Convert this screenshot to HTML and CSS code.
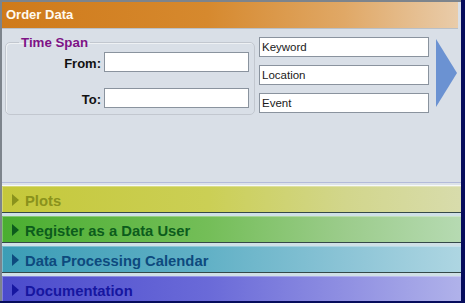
FILE: index.html
```
<!DOCTYPE html>
<html>
<head>
<meta charset="utf-8">
<link rel="stylesheet" href="styles.css">
</head>
<body>
<div class="frame">
  <div class="header">Order Data</div>
  <div class="panel">
    <fieldset class="timespan">
      <legend>Time Span</legend>
      <div class="span-grid">
        <label class="lbl">From:</label><input class="field wide" type="text">
        <label class="lbl">To:</label><input class="field wide" type="text">
      </div>
    </fieldset>
    <div class="search">
      <input class="field narrow" type="text" value="Keyword">
      <input class="field narrow" type="text" value="Location">
      <input class="field narrow" type="text" value="Event">
    </div>
    <svg class="go" width="21" height="68" viewBox="0 0 21 68"><polygon points="0,0 21,34 0,68" fill="#6b92d2"/></svg>
  </div>
  <div class="sep"></div>
  <div class="bars">
    <div class="bar plots"><svg class="tri" width="7" height="12" viewBox="0 0 7 12"><polygon points="0,0 7,6 0,12"/></svg><span>Plots</span></div>
    <div class="bar register"><svg class="tri" width="7" height="12" viewBox="0 0 7 12"><polygon points="0,0 7,6 0,12"/></svg><span>Register as a Data User</span></div>
    <div class="bar calendar"><svg class="tri" width="7" height="12" viewBox="0 0 7 12"><polygon points="0,0 7,6 0,12"/></svg><span>Data Processing Calendar</span></div>
    <div class="bar docs"><svg class="tri" width="7" height="12" viewBox="0 0 7 12"><polygon points="0,0 7,6 0,12"/></svg><span>Documentation</span></div>
  </div>
</div>
</body>
</html>
```
FILE: styles.css
```
html, body {
  margin: 0;
  padding: 0;
  background: #060c5c;
  height: 303px;
  overflow: hidden;
}
.frame {
  width: 461px;
  height: 301px;
  box-sizing: border-box;
  border-left: 2px solid #7d848c;
  border-top: 2px solid #7d848c;
  background: #d9dfe7;
  display: flex;
  flex-direction: column;
  overflow: hidden;
  font-family: "Liberation Sans", Arial, sans-serif;
}
.header {
  flex: none;
  height: 26px;
  line-height: 26px;
  margin-right: 3px;
  padding-left: 4px;
  border-bottom: 1px solid #b9c0c8;
  background: linear-gradient(to right, #cf7a1a 0%, #d6892e 45%, #e0a866 75%, #e9ccaa 100%);
  color: #fffaf0;
  font-weight: bold;
  font-size: 13px;
}
.panel {
  flex: none;
  height: 153px;
  box-sizing: border-box;
  padding: 6px 0 0 3px;
  display: flex;
  align-items: flex-start;
}
.timespan {
  box-sizing: border-box;
  width: 250px;
  margin: 0;
  padding: 2px 0 6px 0;
  border: 1px solid #c2c7cf;
  border-radius: 5px;
  box-shadow: inset 1px 1px 0 #eef1f4;
}
.timespan legend {
  margin-left: 13px;
  padding: 0 2px;
  color: #7e1386;
  font-weight: bold;
  font-size: 13.3px;
  line-height: 15px;
}
.span-grid {
  display: grid;
  grid-template-columns: 95px 145px;
  column-gap: 3px;
  row-gap: 16px;
  align-items: center;
}
.lbl {
  text-align: right;
  font-weight: bold;
  font-size: 13px;
  color: #111;
  padding-top: 2px;
}
.field {
  box-sizing: border-box;
  height: 20px;
  margin: 0;
  padding: 0 2px;
  border: 1px solid #8a939e;
  background: #fff;
  font-family: "Liberation Sans", Arial, sans-serif;
  font-size: 11.5px;
  color: #1a1a1a;
  outline: none;
}
.wide { width: 145px; }
.narrow { width: 170px; }
.search {
  margin: 2px 0 0 4px;
  display: flex;
  flex-direction: column;
  gap: 8px;
}
.go {
  display: block;
  margin: 4px 0 0 7px;
}
.sep {
  flex: none;
  height: 2px;
  border-top: 1px solid #b3bbd9;
  border-bottom: 1px solid #f6f8fa;
  background: #dde3e8;
}
.bars {
  flex: none;
  display: flex;
  flex-direction: column;
  gap: 3px;
  background: #cfe0e6;
}
.bar {
  height: 26px;
  border-bottom: 1px solid #344848;
  display: flex;
  align-items: center;
  padding-left: 10px;
  gap: 6px;
  font-weight: bold;
  font-size: 14.8px;
  box-shadow: inset 1px 1px 0 rgba(255,255,255,0.3);
}
.bar span { padding-top: 3px; }
.tri { display: block; margin-top: 2px; }
.plots {
  background: linear-gradient(to right, #c5c83a 0%, #cbcf55 45%, #d2d68c 75%, #d8dcac 100%);
  color: #8a921c;
  fill: #8a921c;
}
.register {
  background: linear-gradient(to right, #4aae30 0%, #74be58 45%, #9ccc8c 75%, #b6dab2 100%);
  color: #0c5c1c;
  fill: #0c5c1c;
}
.calendar {
  background: linear-gradient(to right, #3b9db6 0%, #62b1c6 45%, #8cc4d6 75%, #aed6e2 100%);
  color: #0d4a7e;
  fill: #0d4a7e;
}
.docs {
  background: linear-gradient(to right, #4b4bcc 0%, #6a6ad8 45%, #9090e2 75%, #b0b2ea 100%);
  color: #1616a0;
  fill: #1616a0;
}
```
